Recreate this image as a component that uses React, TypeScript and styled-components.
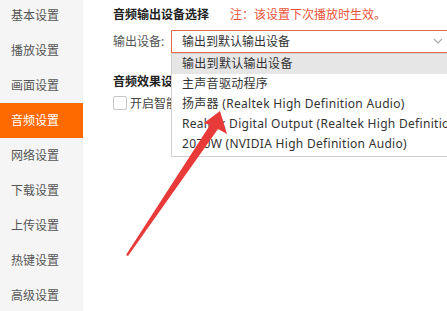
import React from 'react';
import styled, { createGlobalStyle } from 'styled-components';

const GlobalStyle = createGlobalStyle`
    html, body {
        margin: 0;
        padding: 0;
        background: #fff;
        overflow: hidden;
    }
    body {
        font-family: "Noto Sans", "Noto Sans CJK SC", sans-serif;
        color: #333;
    }
`;

const Page = styled.div`
    position: relative;
    display: flex;
    width: 447px;
    height: 311px;
    overflow: hidden;
`;

const Sidebar = styled.div`
    width: 83px;
    flex-shrink: 0;
    background: #f5f5f5;
    display: flex;
    flex-direction: column;
`;

const NavList = styled.div`
    margin-top: -2px;
    display: flex;
    flex-direction: column;
`;

const NavItem = styled.div<{ $active?: boolean }>`
    height: 35px;
    line-height: 35px;
    padding-left: 11px;
    font-size: 12px;
    color: ${(p) => (p.$active ? '#fff' : '#555')};
    background: ${(p) => (p.$active ? '#ff6a00' : 'transparent')};
    white-space: nowrap;
`;

const Content = styled.div`
    flex: 1;
    padding: 3px 0 0 30px;
    position: relative;
`;

const SectionHead = styled.div`
    display: flex;
    align-items: center;
    gap: 21px;
    height: 22px;
    font-size: 12px;
    font-weight: bold;
    color: #222;
    white-space: nowrap;
`;

const Note = styled.span`
    font-weight: normal;
    color: #e8543a;
    font-size: 12px;
`;

const Row = styled.div`
    display: flex;
    align-items: center;
    height: 24px;
    margin-top: 4px;
    font-size: 12px;
    white-space: nowrap;
`;

const Label = styled.span`
    color: #555;
    width: 58px;
`;

const Select = styled.div`
    flex: 1;
    height: 21px;
    border: 1px solid #e46a4c;
    border-right: none;
    display: flex;
    align-items: center;
    padding-left: 10px;
    font-size: 12px;
    color: #333;
    position: relative;
`;

const Chevron = styled.svg`
    position: absolute;
    right: 4px;
    top: 7px;
`;

const SecondHead = styled(SectionHead)`
    margin-top: 17px;
`;

const CheckRow = styled.div`
    display: flex;
    align-items: center;
    gap: 3px;
    margin-top: 2px;
    font-size: 12px;
    color: #444;
    white-space: nowrap;
`;

const Box = styled.span`
    width: 12px;
    height: 12px;
    border: 1px solid #c8c8c8;
    border-radius: 2px;
    background: #fff;
`;

const Dropdown = styled.div`
    position: absolute;
    left: 171px;
    top: 53px;
    width: 290px;
    background: #fff;
    border: 1px solid #d0d0d0;
    padding: 0 0 2px 0;
`;

const Option = styled.div<{ $hover?: boolean }>`
    height: 20px;
    line-height: 20px;
    padding-left: 10px;
    font-size: 12px;
    letter-spacing: 0.3px;
    color: #333;
    white-space: nowrap;
    background: ${(p) => (p.$hover ? '#e6e6e6' : 'transparent')};
`;

const Arrow = styled.svg`
    position: absolute;
    left: 0;
    top: 0;
    pointer-events: none;
`;

const navItems = ['基本设置', '播放设置', '画面设置', '音频设置', '网络设置', '下载设置', '上传设置', '热键设置', '高级设置'];

const options = [
    '输出到默认输出设备',
    '主声音驱动程序',
    '扬声器 (Realtek High Definition Audio)',
    'Realtek Digital Output (Realtek High Definition Audio)',
    '2070W (NVIDIA High Definition Audio)',
];

export default function App() {
    return (
        <Page>
            <GlobalStyle />
            <Sidebar>
                <NavList>
                    {navItems.map((n) => (
                        <NavItem key={n} $active={n === '音频设置'}>
                            {n}
                        </NavItem>
                    ))}
                </NavList>
            </Sidebar>
            <Content>
                <SectionHead>
                    音频输出设备选择
                    <Note>注：该设置下次播放时生效。</Note>
                </SectionHead>
                <Row>
                    <Label>输出设备:</Label>
                    <Select>
                        输出到默认输出设备
                        <Chevron width="10" height="7" viewBox="0 0 10 7">
                            <path d="M1 1l4 4 4-4" fill="none" stroke="#aaa" strokeWidth="1.2" />
                        </Chevron>
                    </Select>
                </Row>
                <SecondHead>音频效果设置</SecondHead>
                <CheckRow>
                    <Box />
                    开启智能音效
                </CheckRow>
            </Content>
            <Dropdown>
                {options.map((o, i) => (
                    <Option key={o} $hover={i === 0}>
                        {o}
                    </Option>
                ))}
            </Dropdown>
            <Arrow width="447" height="311" viewBox="0 0 447 311">
                <path d="M220 111 L227 134 L218 129 L128 256 L126 255 L210 125 L204 123 Z" fill="#e83a38" />
            </Arrow>
        </Page>
    );
}
